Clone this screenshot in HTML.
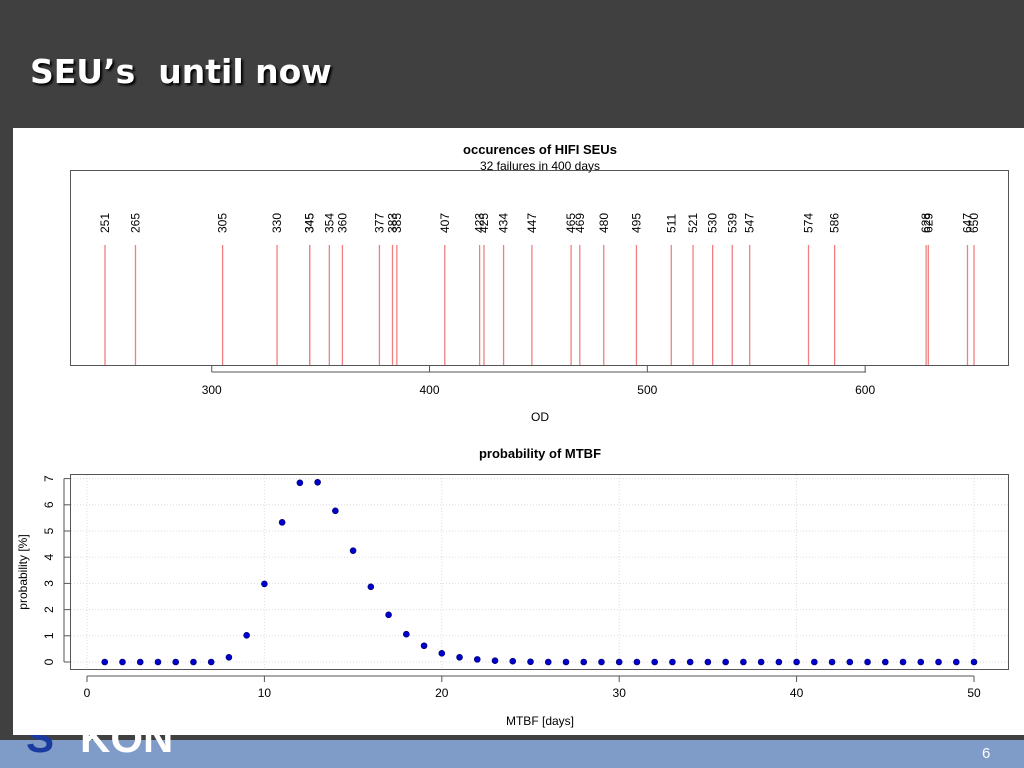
<!DOCTYPE html>
<html><head><meta charset="utf-8"><style>
body{margin:0;width:1024px;height:768px;overflow:hidden;background:#404040;font-family:"Liberation Sans",sans-serif;position:relative}
.title{position:absolute;left:30px;top:52px;color:#fff;font-family:"DejaVu Sans",sans-serif;font-size:33px;font-weight:bold;text-shadow:2px 2px 2px #000;white-space:pre}
.img{position:absolute;left:13px;top:128px;width:1011px;height:607px;background:#fff}
.foot{position:absolute;left:0;top:740px;width:1024px;height:28px;background:#7f9bc8}
.num{position:absolute;left:982px;top:745px;color:#fff;font-size:15px}
svg{position:absolute;left:0;top:0}
</style></head><body>
<div class="title">SEU’s  until now</div>
<div class="img"></div>
<div class="foot"></div>
<div class="num">6</div>
<svg id="s" width="1024" height="768" xmlns="http://www.w3.org/2000/svg" font-family="Liberation Sans, sans-serif"></svg>
<script>
var s='';
s+='<text x="540" y="154" font-size="13" font-weight="bold" text-anchor="middle">occurences of HIFI SEUs</text>';
s+='<text x="540" y="170" font-size="12" text-anchor="middle">32 failures in 400 days</text>';
s+='<rect x="70.5" y="170.5" width="938" height="195" fill="none" stroke="#555" stroke-width="1"/>';
var v=[251,265,305,330,345,345,354,360,377,383,385,407,423,425,434,447,465,469,480,495,511,521,530,539,547,574,586,628,629,647,650];
v.forEach(function(a){var x=105+(a-251)*2.178;
s+='<line x1="'+x+'" y1="245" x2="'+x+'" y2="365" stroke="#f08080" stroke-width="1.3"/>';
s+='<text transform="translate('+(x+4)+',233) rotate(-90)" font-size="12" fill="#000">'+a+'</text>';});
[300,400,500,600].forEach(function(a){var x=105+(a-251)*2.178;
s+='<line x1="'+x+'" y1="366" x2="'+x+'" y2="372" stroke="#555"/><text x="'+x+'" y="394" font-size="12" text-anchor="middle">'+a+'</text>';});
s+='<line x1="211.7" y1="372" x2="866" y2="372" stroke="#555"/>';
s+='<text x="540" y="421" font-size="12" text-anchor="middle">OD</text>';
s+='<text x="540" y="458" font-size="13" font-weight="bold" text-anchor="middle">probability of MTBF</text>';
function X(d){return 87+d*17.74}function Y(p){return 662-p*26.2}
for(var i=0;i<=50;i+=10)s+='<line x1="'+X(i)+'" y1="475" x2="'+X(i)+'" y2="669" stroke="#ddd" stroke-dasharray="1,2"/>';
for(var j=0;j<=7;j++)s+='<line x1="71" y1="'+Y(j)+'" x2="1008" y2="'+Y(j)+'" stroke="#ddd" stroke-dasharray="1,2"/>';
s+='<rect x="70.5" y="474.5" width="938" height="195" fill="none" stroke="#555"/>';
for(var j=0;j<=7;j++){s+='<line x1="64" y1="'+Y(j)+'" x2="70" y2="'+Y(j)+'" stroke="#555"/><text transform="translate('+53+','+(Y(j))+') rotate(-90)" font-size="12" text-anchor="middle">'+j+'</text>';}
s+='<line x1="64" y1="'+Y(0)+'" x2="64" y2="'+Y(7)+'" stroke="#555"/>';
s+='<text transform="translate(27,572) rotate(-90)" font-size="12" text-anchor="middle">probability [%]</text>';
var p={8:0.18,9:1.02,10:2.98,11:5.33,12:6.84,13:6.86,14:5.77,15:4.25,16:2.87,17:1.8,18:1.06,19:0.62,20:0.33,21:0.18,22:0.1,23:0.05,24:0.03,25:0.01};
for(var d=1;d<=50;d++){var q=p[d]||0;s+='<circle cx="'+X(d)+'" cy="'+Y(q)+'" r="3" fill="#0000cc" stroke="#000066" stroke-width="0.6"/>';}
s+='<rect x="155" y="735" width="869" height="5" fill="#404040"/>';
s+='<text x="26" y="752" font-size="42" font-weight="bold" fill="#1a3aa0">S</text>';
s+='<text x="80" y="752" font-size="42" font-weight="bold" fill="#fff">KON</text>';
s+='<rect x="13" y="700" width="1011" height="35" fill="#fff"/>';
s+='<line x1="'+X(0)+'" y1="676" x2="'+X(50)+'" y2="676" stroke="#555"/>';
for(var i=0;i<=50;i+=10)s+='<line x1="'+X(i)+'" y1="676" x2="'+X(i)+'" y2="682" stroke="#555"/><text x="'+X(i)+'" y="697" font-size="12" text-anchor="middle">'+i+'</text>';
s+='<text x="540" y="725" font-size="12" text-anchor="middle">MTBF [days]</text>';
document.getElementById('s').innerHTML=s;
</script>
</body></html>
